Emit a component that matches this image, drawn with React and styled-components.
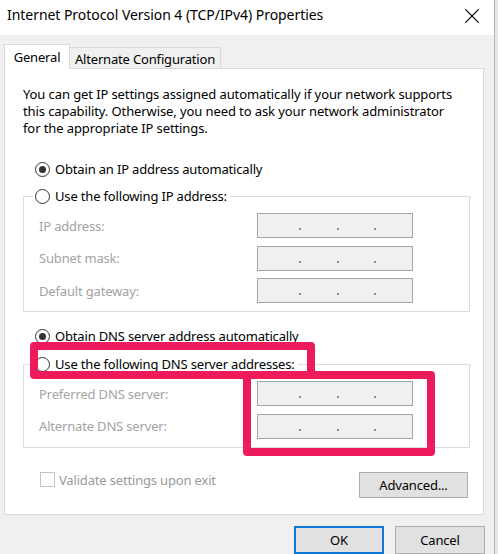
import React from "react";
import styled, { createGlobalStyle } from "styled-components";

const Global = createGlobalStyle`
  html, body { margin: 0; padding: 0; background: #e6e6e6; }
  * { box-sizing: border-box; }
`;

const font = `"Segoe UI", "Noto Sans", "Open Sans", sans-serif`;

const Root = styled.div`
  position: relative;
  width: 498px;
  height: 554px;
  overflow: hidden;
  display: flex;
  background: #e6e6e6;
  font-family: ${font};
  font-size: 13px;
  letter-spacing: -0.17px;
  color: #000;
`;

const Window = styled.div`
  width: 495px;
  border-right: 1px solid #b5b5b5;
  display: flex;
  flex-direction: column;
  background: #f0f0f0;
`;

const TitleBar = styled.div`
  height: 35px;
  flex: none;
  background: #fff;
  display: flex;
  justify-content: space-between;
  align-items: flex-start;
  padding-left: 7px;
`;

const Title = styled.div`
  padding-top: 5px;
  font-size: 14px;
  line-height: 20px;
  letter-spacing: -0.05px;
`;

const CloseButton = styled.div`
  width: 44px;
  height: 35px;
  display: flex;
  align-items: center;
  justify-content: center;
  padding-bottom: 4px;
`;

const Body = styled.div`
  padding: 9px 10px 0 4px;
  display: flex;
  flex-direction: column;
`;

const TabList = styled.div`
  display: flex;
  align-items: flex-end;
  height: 25px;
  margin-bottom: -1px;
  position: relative;
  z-index: 1;
`;

const Tab = styled.div`
  width: ${(p) => p.$w}px;
  height: ${(p) => (p.$active ? 25 : 21)}px;
  margin-bottom: ${(p) => (p.$active ? 0 : 1)}px;
  background: ${(p) => (p.$active ? "#fff" : "#f0f0f0")};
  border: 1px solid #d9d9d9;
  border-bottom: none;
  border-left: ${(p) => (p.$active ? "1px solid #d9d9d9" : "none")};
  display: flex;
  align-items: center;
  justify-content: center;
  padding-top: ${(p) => (p.$active ? 0 : 2)}px;
  line-height: 16px;
`;

const Panel = styled.div`
  background: #fff;
  border: 1px solid #d9d9d9;
  padding: 17px 13px 16px 18px;
  display: flex;
  flex-direction: column;
`;

const Description = styled.p`
  margin: 0;
  line-height: 16.8px;
  letter-spacing: -0.1px;
`;

const RadioRow = styled.div`
  display: flex;
  align-items: center;
  gap: 5px;
  height: 20px;
  padding-left: ${(p) => p.$indent ?? 12}px;
  margin-top: ${(p) => p.$mt ?? 0}px;
  line-height: 16px;
`;

const RadioCircle = styled.span`
  width: 15px;
  height: 15px;
  flex: none;
  border-radius: 50%;
  border: 1px solid #333;
  background: #fff;
  display: flex;
  align-items: center;
  justify-content: center;
  &::after {
    content: "";
    width: 7px;
    height: 7px;
    border-radius: 50%;
    background: ${(p) => (p.$checked ? "#333" : "transparent")};
  }
`;

const Group = styled.fieldset`
  margin: ${(p) => p.$mt}px 0 0 0;
  border: 1px solid #dcdcdc;
  padding: 7px 0 8px 9px;
  min-inline-size: 0;
`;

const Legend = styled.legend`
  padding: 0 3px 0 2px;
  margin: 0;
`;

const Rows = styled.div`
  display: flex;
  flex-direction: column;
  gap: 7.5px;
  padding-left: 6px;
`;

const FieldRow = styled.div`
  display: flex;
  align-items: center;
  height: 25px;
`;

const FieldLabel = styled.span`
  width: 218px;
  color: #a3a3a3;
  line-height: 16px;
`;

const IpBox = styled.div`
  width: 156px;
  height: 25px;
  border: 1px solid #a6a6a6;
  background: #f0f0f0;
  display: flex;
  align-items: center;
  padding: 7px 0 0 41px;
  gap: 35.5px;
`;

const Dot = styled.span`
  width: 2px;
  height: 2px;
  background: #8a8a8a;
`;

const BottomRow = styled.div`
  margin-top: 24px;
  display: flex;
  justify-content: space-between;
  align-items: flex-start;
  padding: 0 2px 0 17px;
`;

const CheckLabel = styled.label`
  display: flex;
  align-items: center;
  gap: 4px;
  height: 16px;
  color: #9a9a9a;
  line-height: 16px;
`;

const CheckBox = styled.span`
  width: 15px;
  height: 15px;
  border: 1px solid #c4c4c4;
  background: #fff;
`;

const Button = styled.div`
  width: ${(p) => p.$w}px;
  height: ${(p) => p.$h}px;
  background: #e1e1e1;
  border: ${(p) => (p.$default ? "2px solid #0f78d4" : "1px solid #adadad")};
  display: flex;
  align-items: center;
  justify-content: center;
  line-height: 16px;
`;

const Footer = styled.div`
  margin-top: 11px;
  margin-right: -1px;
  display: flex;
  justify-content: flex-end;
  gap: 11px;
`;

const Highlight = styled.div`
  position: absolute;
  left: ${(p) => p.$x}px;
  top: ${(p) => p.$y}px;
  width: ${(p) => p.$w}px;
  height: ${(p) => p.$h}px;
  border: 8px solid #ee1b5c;
  border-radius: 4px;
  pointer-events: none;
`;

const Radio = ({ checked, children, indent, mt }) => (
  <RadioRow $indent={indent} $mt={mt}>
    <RadioCircle $checked={checked} />
    <span>{children}</span>
  </RadioRow>
);

const IpField = () => (
  <IpBox>
    <Dot />
    <Dot />
    <Dot />
  </IpBox>
);

const Field = ({ label }) => (
  <FieldRow>
    <FieldLabel>{label}</FieldLabel>
    <IpField />
  </FieldRow>
);

export default function App() {
  return (
    <>
      <Global />
      <Root>
        <Window>
          <TitleBar>
            <Title>Internet Protocol Version 4 (TCP/IPv4) Properties</Title>
            <CloseButton>
              <svg width="14" height="14" viewBox="0 0 14 14">
                <path d="M0.5 0.5 L13.5 13.5 M13.5 0.5 L0.5 13.5" stroke="#111" strokeWidth="1.1" fill="none" />
              </svg>
            </CloseButton>
          </TitleBar>
          <Body>
            <TabList>
              <Tab $active $w={66}>General</Tab>
              <Tab $w={151}>Alternate Configuration</Tab>
            </TabList>
            <Panel>
              <Description>
                You can get IP settings assigned automatically if your network supports
                <br />
                this capability. Otherwise, you need to ask your network administrator
                <br />
                for the appropriate IP settings.
              </Description>
              <Radio checked mt={23}>Obtain an IP address automatically</Radio>
              <Group $mt={7}>
                <Legend>
                  <Radio indent={0}>Use the following IP address:</Radio>
                </Legend>
                <Rows>
                  <Field label="IP address:" />
                  <Field label="Subnet mask:" />
                  <Field label="Default gateway:" />
                </Rows>
              </Group>
              <Radio checked mt={14}>Obtain DNS server address automatically</Radio>
              <Group $mt={8}>
                <Legend>
                  <Radio indent={0}>Use the following DNS server addresses:</Radio>
                </Legend>
                <Rows>
                  <Field label="Preferred DNS server:" />
                  <Field label="Alternate DNS server:" />
                </Rows>
              </Group>
              <BottomRow>
                <CheckLabel>
                  <CheckBox />
                  <span>Validate settings upon exit</span>
                </CheckLabel>
                <Button $w={109} $h={26}>Advanced...</Button>
              </BottomRow>
            </Panel>
            <Footer>
              <Button $default $w={90} $h={28}>OK</Button>
              <Button $w={90} $h={28}>Cancel</Button>
            </Footer>
          </Body>
        </Window>
        <Highlight $x={30} $y={342} $w={285} $h={37} />
        <Highlight $x={243} $y={371} $w={192} $h={85} />
      </Root>
    </>
  );
}
